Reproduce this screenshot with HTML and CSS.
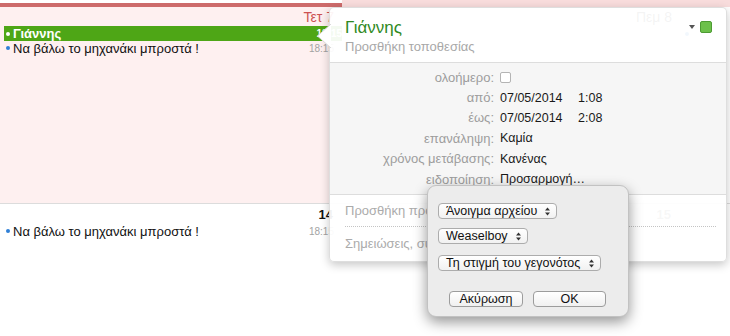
FILE: index.html
```html
<!DOCTYPE html>
<html lang="el">
<head>
<meta charset="utf-8">
<title>Ημερολόγιο</title>
<link rel="stylesheet" href="styles.css">
</head>
<body>
<div class="week">
  <div class="col">
    <div class="band band-today"></div>
    <div class="cell today">
      <div class="dayhead">Τετ 7</div>
      <div class="event sel"><span class="dot"></span><span class="ev-title">Γιάννης</span><span class="ev-time">18:15</span></div>
      <div class="event"><span class="dot"></span><span class="ev-title">Να βάλω το μηχανάκι μπροστά !</span><span class="ev-time">18:15</span></div>
    </div>
    <div class="cell w2">
      <div class="daynum">14</div>
      <div class="event"><span class="dot"></span><span class="ev-title">Να βάλω το μηχανάκι μπροστά !</span><span class="ev-time">18:15</span></div>
    </div>
  </div>
  <div class="col">
    <div class="band"></div>
    <div class="cell">
      <div class="dayhead">Πεμ 8</div>
    </div>
    <div class="cell w2">
      <div class="daynum faint">15</div>
    </div>
  </div>
  <div class="col">
    <div class="band"></div>
    <div class="cell">
      <div class="dayhead"></div>
      <div class="event next"><span class="dot"></span><span class="ev-title">Γιορτή</span></div>
    </div>
    <div class="cell w2"></div>
  </div>
</div>

<div class="popover">
  <svg class="pop-arrow" width="14" height="24" viewBox="0 0 14 24"><polygon points="14,0 0.5,12 14,24" fill="#ffffff"/><polyline points="14,0 0.5,12 14,24" fill="none" stroke="#d8d8d8" stroke-width="1"/></svg>
  <div class="pop-head">
    <div class="pop-titles">
      <div class="pop-title">Γιάννης</div>
      <div class="pop-sub">Προσθήκη τοποθεσίας</div>
    </div>
    <div class="picker"><span class="caret"></span><span class="swatch"></span></div>
  </div>
  <div class="pop-details">
    <div class="lbl">ολοήμερο:</div><div class="val"><span class="check"></span></div>
    <div class="lbl">από:</div><div class="val"><span class="date">07/05/2014</span><span>1:08</span></div>
    <div class="lbl">έως:</div><div class="val"><span class="date">07/05/2014</span><span>2:08</span></div>
    <div class="lbl">επανάληψη:</div><div class="val">Καμία</div>
    <div class="lbl">χρόνος μετάβασης:</div><div class="val">Κανένας</div>
    <div class="lbl">ειδοποίηση:</div><div class="val">Προσαρμογή…</div>
  </div>
  <div class="pop-foot">
    <div class="foot-row dotted"><span class="foot-text">Προσθήκη προσκεκλημένων</span></div>
    <div class="foot-row"><span class="foot-text">Σημειώσεις, συνημμένα ή URL</span></div>
  </div>
</div>

<div class="sheet">
  <div class="popup p1"><span>Άνοιγμα αρχείου</span><svg width="5" height="9" viewBox="0 0 5 9"><polygon points="0,3.5 2.5,0.5 5,3.5" fill="#333"/><polygon points="0,5.5 2.5,8.5 5,5.5" fill="#333"/></svg></div>
  <div class="popup p2"><span>Weaselboy</span><svg width="5" height="9" viewBox="0 0 5 9"><polygon points="0,3.5 2.5,0.5 5,3.5" fill="#333"/><polygon points="0,5.5 2.5,8.5 5,5.5" fill="#333"/></svg></div>
  <div class="popup p3"><span>Τη στιγμή του γεγονότος</span><svg width="5" height="9" viewBox="0 0 5 9"><polygon points="0,3.5 2.5,0.5 5,3.5" fill="#333"/><polygon points="0,5.5 2.5,8.5 5,5.5" fill="#333"/></svg></div>
  <div class="buttons">
    <div class="btn b-cancel">Ακύρωση</div>
    <div class="btn b-ok">OK</div>
  </div>
</div>
</body>
</html>
```

FILE: styles.css
```css
* { box-sizing: border-box; }
html, body { margin: 0; padding: 0; }
body {
  width: 730px;
  height: 336px;
  overflow: hidden;
  position: relative;
  background: #ffffff;
  font-family: "Liberation Sans", Arial, sans-serif;
  color: #1a1a1a;
}

/* calendar grid underneath */
.week {
  display: grid;
  grid-template-columns: 342px 338px 1fr;
  height: 336px;
}
.col { display: flex; flex-direction: column; min-width: 0; overflow: hidden; }
.band { height: 7px; background: #f8dcdc; flex: none; }
.band-today { height: 4px; margin-top: 3px; background: #cd6b6b; }
.cell { flex: none; height: 197px; border-bottom: 1px solid #dcdcdc; }
.cell.today { background: #fef0f0; }
.cell.w2 { flex: 1; border-bottom: 0; }

.dayhead {
  height: 19px;
  line-height: 20px;
  font-size: 14px;
  text-align: right;
  padding-right: 8px;
  color: #444;
}
.today .dayhead { color: #cc5252; }
.daynum {
  height: 20px;
  line-height: 22px;
  font-size: 13px;
  font-weight: bold;
  text-align: right;
  padding-right: 9px;
  color: #111;
}
.daynum.faint { color: #777; }

.event {
  display: flex;
  align-items: center;
  height: 14px;
  margin: 0 4px;
  padding: 0 4px 0 2px;
  font-size: 13px;
  white-space: nowrap;
  color: #111;
}
.event .dot {
  flex: none;
  width: 4px; height: 4px;
  border-radius: 50%;
  background: #2f7fd6;
  margin-right: 3px;
}
.ev-title { flex: 1; overflow: hidden; }
.ev-time { font-size: 10px; color: #a3a3a3; margin-left: 6px; }
.event.sel {
  height: 15px;
  margin-right: 0;
  padding-right: 0;
  background: #4ea616;
  color: #ffffff;
  font-weight: bold;
}
.event.sel .dot { background: #ffffff; }
.event.sel .ev-time { color: #ffffff; }
.event.next { height: 15px; margin-left: 4px; padding-left: 1px; color: #555; }
.event.next .ev-title { padding-left: 34px; }

/* popover */
.popover {
  position: absolute;
  left: 329px;
  top: 7px;
  width: 398px;
  height: 255px;
  background: rgba(255, 255, 255, 0.94);
  border: 1px solid rgba(0, 0, 0, 0.13);
  border-radius: 5px;
  box-shadow: 0 3px 10px rgba(0, 0, 0, 0.22);
  display: flex;
  flex-direction: column;
}
.pop-arrow { position: absolute; left: -13px; top: 16px; }
.pop-head {
  flex: none;
  height: 55px;
  padding: 0 14px 0 15px;
  display: flex;
  justify-content: space-between;
  border-bottom: 1px solid #dddddd;
}
.pop-titles { padding-top: 10px; }
.pop-title { font-size: 17px; line-height: 20px; color: #2f8a23; }
.pop-sub { font-size: 13px; line-height: 16px; margin-top: 1px; color: #a8a8a8; }
.picker { display: flex; align-items: center; height: 12px; margin-top: 13px; }
.caret {
  width: 0; height: 0;
  border-left: 3px solid transparent;
  border-right: 3px solid transparent;
  border-top: 4px solid #555;
  margin-right: 5px;
}
.swatch {
  width: 12px; height: 12px;
  border-radius: 2px;
  background: #6cc04a;
  border: 1px solid #4d9b33;
}

.pop-details {
  flex: none;
  height: 132px;
  background: rgba(0, 0, 0, 0.035);
  border-bottom: 1px solid #dddddd;
  padding-top: 4px;
  display: grid;
  grid-template-columns: 164px 1fr;
  grid-auto-rows: 20.4px;
  column-gap: 6px;
  font-size: 12.5px;
  align-items: center;
}
.lbl { text-align: right; color: #9d9d9d; font-size: 13px; }
.val { color: #1a1a1a; display: flex; align-items: center; }
.date { display: inline-block; width: 78px; }
.check {
  width: 11px; height: 11px;
  border: 1px solid #b4b4b4;
  border-radius: 2px;
  background: #ffffff;
}

.pop-foot { flex: 1; padding: 0 10px 0 15px; }
.foot-row { font-size: 13px; color: #ababab; white-space: nowrap; }
.foot-text { display: inline-block; max-width: 82px; overflow: hidden; vertical-align: top; }
.foot-row.dotted { height: 32px; line-height: 31px; border-bottom: 1px dotted #c4c4c4; }
.foot-row:last-child { line-height: 34px; }

/* alert sheet */
.sheet {
  position: absolute;
  left: 427px;
  top: 185px;
  width: 202px;
  height: 132px;
  background: #ececec;
  border: 1px solid #c2c2c2;
  border-radius: 9px;
  box-shadow: 0 5px 14px rgba(0, 0, 0, 0.42);
  padding: 17px 0 0 10px;
  display: flex;
  flex-direction: column;
  align-items: flex-start;
}
.popup {
  height: 16px;
  display: flex;
  align-items: center;
  justify-content: space-between;
  padding: 0 6px 0 7px;
  border: 1px solid #acacac;
  border-radius: 4px;
  background: linear-gradient(#ffffff, #f1f1f1);
  font-size: 12.5px;
  color: #111;
  white-space: nowrap;
}
.p1 { width: 119px; margin-bottom: 9px; }
.p2 { width: 90px; margin-bottom: 11px; }
.p3 { width: 163px; margin-bottom: 20px; }
.buttons { display: flex; gap: 10px; padding-left: 11px; }
.btn {
  height: 16px;
  line-height: 14px;
  text-align: center;
  border: 1px solid #9c9c9c;
  border-radius: 4px;
  background: linear-gradient(#ffffff, #f0f0f0);
  font-size: 12.5px;
  color: #111;
}
.b-cancel { width: 74px; }
.b-ok { width: 73px; }
```
